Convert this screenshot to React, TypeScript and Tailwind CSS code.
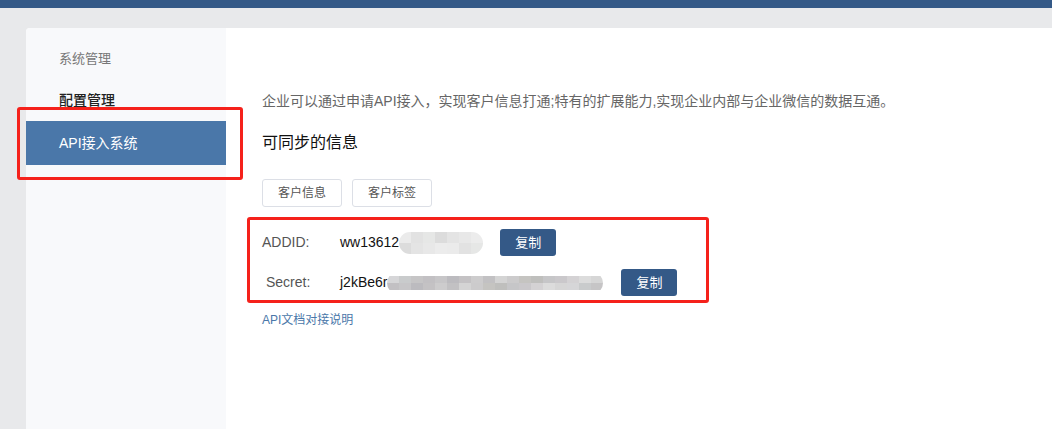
import React from 'react';

const font = 'font-["Liberation_Sans","Noto_Sans_CJK_SC",sans-serif]';

function Blur({ cells }: { cells: string[] }) {
  return (
    <div className="flex h-[22px] overflow-hidden rounded-full">
      {cells.map((c, i) => (
        <div key={i} className="flex w-[12px] flex-col">
          <div className="h-[11px]" style={{ background: c }} />
          <div className="h-[11px]" style={{ background: cells[(i + 3) % cells.length] }} />
        </div>
      ))}
    </div>
  );
}

function CopyBtn() {
  return (
    <button className="h-[27px] w-[56px] rounded-[3px] bg-[#345987] text-[13px] text-white">
      复制
    </button>
  );
}

export default function App() {
  const addidCells = ['#ebebeb', '#e2e2e2', '#e6e7e6', '#dcdcdc', '#e4e4e4', '#e8e8e8', '#ececec'];
  const secretCells = [
    '#d6d6d8', '#c9cbcc', '#c6c5c6', '#c2c0c3', '#c7c6c8', '#bcbbbf', '#c4c2c4',
    '#cdcccd', '#c2c1c3', '#d4d4d4', '#cccbcc', '#c5c4c1', '#bfbfbd', '#c6c6c8',
    '#cac8cb', '#d4d2d4', '#dcdcdc', '#d6d6d6',
  ];

  return (
    <div className={`relative h-[429px] w-[1052px] overflow-hidden bg-[#e8e9eb] ${font}`}>
      <div className="h-[8px] bg-[#345987]" />
      <div className="ml-[26px] mt-[20px] flex h-[401px] overflow-hidden rounded-tl-[4px] bg-white">
        <aside className="w-[200px] shrink-0 bg-[#f8f9fb] pt-[22px]">
          <div className="pl-[33px] text-[13px] leading-[18px] text-[#777]">系统管理</div>
          <div className="mt-[22px] pl-[33px] text-[14px] font-medium leading-[20px] text-[#222]">配置管理</div>
          <div className="mt-[11px] flex h-[44px] items-center bg-[#4a77a9] pl-[33px] text-[14px] text-white">
            API接入系统
          </div>
        </aside>
        <main className="flex-1 pl-[36px] pt-[64px]">
          <p className="text-[14px] leading-[18px] text-[#666]">
            企业可以通过申请API接入，实现客户信息打通;特有的扩展能力,实现企业内部与企业微信的数据互通。
          </p>
          <h2 className="mt-[22px] text-[16px] leading-[22px] text-[#111]">可同步的信息</h2>
          <div className="mt-[25px] flex gap-[10px]">
            <button className="h-[28px] w-[80px] rounded-[3px] border border-[#dcdfe6] text-[12px] text-[#555]">
              客户信息
            </button>
            <button className="h-[28px] w-[80px] rounded-[3px] border border-[#dcdfe6] text-[12px] text-[#555]">
              客户标签
            </button>
          </div>
          <div className="mt-[22px] flex items-center">
            <span className="w-[78px] text-[14px] text-[#555]">ADDID:</span>
            <span className="text-[14px] text-[#111]">ww13612</span>
            <Blur cells={addidCells} />
            <div className="ml-[17px]">
              <CopyBtn />
            </div>
          </div>
          <div className="mt-[13px] flex items-center">
            <span className="w-[78px] pl-[4px] text-[14px] text-[#555]">Secret:</span>
            <span className="text-[14px] text-[#111]">j2kBe6r</span>
            <div className="h-[14px] w-[216px] overflow-hidden">
              <div className="-mt-[4px]">
                <Blur cells={secretCells} />
              </div>
            </div>
            <div className="ml-[18px]">
              <CopyBtn />
            </div>
          </div>
          <a className="mt-[15px] block text-[12px] text-[#4a77a9]">API文档对接说明</a>
        </main>
      </div>

      {/* annotation boxes */}
      <div className="absolute left-[17px] top-[107px] h-[73px] w-[226px] rounded-[3px] border-[3px] border-[#f5211b]" />
      <div className="absolute left-[247px] top-[217px] h-[86px] w-[462px] rounded-[3px] border-[3px] border-[#f5211b]" />
    </div>
  );
}
